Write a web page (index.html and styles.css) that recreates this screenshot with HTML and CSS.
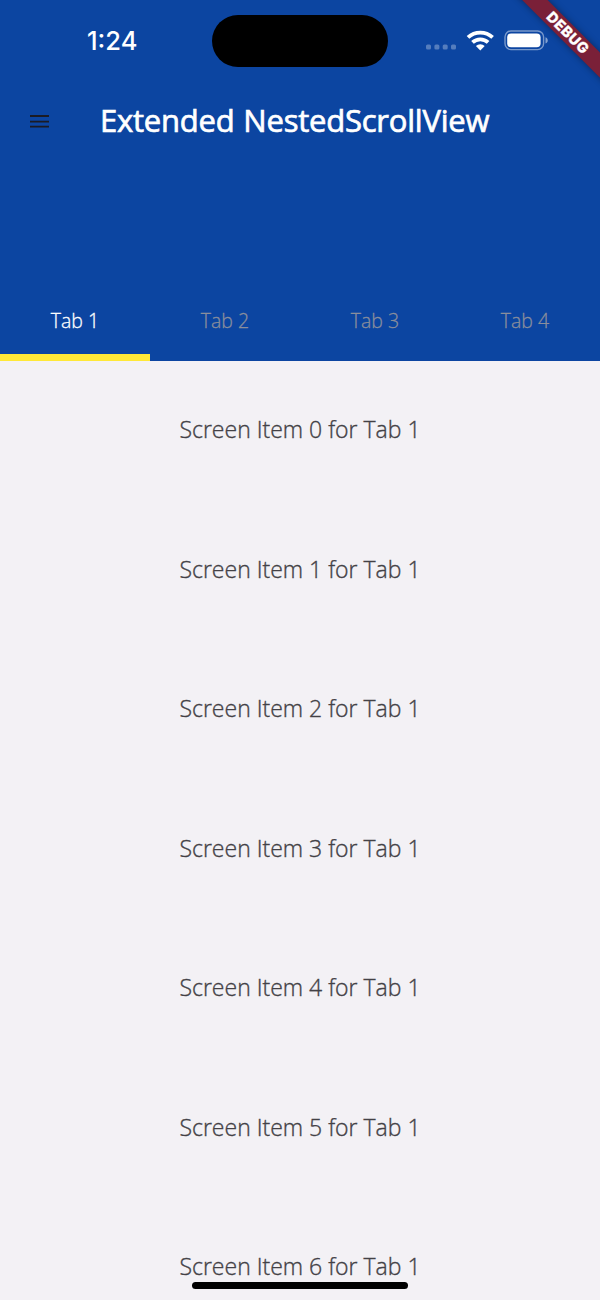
FILE: index.html
```html
<!DOCTYPE html>
<html lang="en">
<head>
<meta charset="utf-8">
<title>Extended NestedScrollView</title>
<link rel="stylesheet" href="styles.css">
</head>
<body>
<div class="screen">
  <header class="app-header">
    <div class="status-bar">
      <div class="clock">1:24</div>
      <div class="island"></div>
      <svg class="status-icons" width="124" height="22" viewBox="0 0 124 22">
        <g fill="#fff" fill-opacity=".3">
          <rect x="1" y="14.5" width="5" height="5" rx="1.5"/>
          <rect x="9.4" y="14.5" width="5" height="5" rx="1.5"/>
          <rect x="17.7" y="14.5" width="5" height="5" rx="1.5"/>
          <rect x="26" y="14.5" width="5" height="5" rx="1.5"/>
        </g>
        <g fill="none" stroke="#fff" stroke-width="3.8">
          <path d="M43 7.4a18 18 0 0 1 24.6 0"/>
          <path d="M47.5 12.4a11.4 11.4 0 0 1 15.6 0"/>
        </g>
        <path d="M50.9 16a6.4 6.4 0 0 1 8.8 0l-4.4 4.4z" fill="#fff"/>
        <rect x="80" y="1" width="38.6" height="18.6" rx="6" fill="none" stroke="#fff" stroke-opacity=".45" stroke-width="1.4"/>
        <rect x="82.2" y="3.4" width="33.4" height="13.8" rx="4" fill="#fff"/>
        <path d="M120.5 7.2c3 1.2 3 5.2 0 6.4z" fill="#fff" fill-opacity=".5"/>
      </svg>
    </div>
    <div class="toolbar">
      <svg class="menu" width="20" height="16" viewBox="0 0 20 16"><path d="M0 3h19M0 8.6h19M0 13.6h19" stroke="#1b1b24" stroke-width="1.8"/></svg>
      <h1 class="title">Extended NestedScrollView</h1>
    </div>
    <nav class="tabs">
      <div class="tab active">Tab 1</div>
      <div class="tab">Tab 2</div>
      <div class="tab">Tab 3</div>
      <div class="tab">Tab 4</div>
    </nav>
  </header>
  <main class="list">
    <div class="item">Screen Item 0 for Tab 1</div>
    <div class="item">Screen Item 1 for Tab 1</div>
    <div class="item">Screen Item 2 for Tab 1</div>
    <div class="item">Screen Item 3 for Tab 1</div>
    <div class="item">Screen Item 4 for Tab 1</div>
    <div class="item">Screen Item 5 for Tab 1</div>
    <div class="item">Screen Item 6 for Tab 1</div>
  </main>
  <div class="debug">DEBUG</div>
  <div class="home-bar"></div>
</div>
</body>
</html>
```
FILE: styles.css
```css
* { box-sizing: border-box; }
body { margin: 0; font-family: "Open Sans", "Noto Sans", sans-serif; }
.screen { position: relative; width: 600px; height: 1300px; overflow: hidden; background: #f3f1f5; }
.app-header { height: 361px; background: #0c45a1; display: flex; flex-direction: column; }
.status-bar { height: 82px; display: grid; grid-template-columns: 212px 176px 212px; align-items: center; }
.clock { padding-left: 87px; font: 500 25.5px/30px Inter, sans-serif; color: #fff; }
.island { height: 52px; border-radius: 26px; background: #000; }
.status-icons { margin-left: 37px; }
.toolbar { height: 78px; display: flex; align-items: center; padding-left: 29.5px; }
.menu { flex: none; }
.title { margin: -3px 0 0 50.5px; font-size: 31px; line-height: 44px; font-weight: 400; letter-spacing: -0.22px; word-spacing: 1px; -webkit-text-stroke: 0.7px #fff; color: #fff; white-space: nowrap; }
.tabs { margin-top: auto; height: 80px; display: grid; grid-template-columns: repeat(4, 1fr); }
.tab { text-align: center; padding-top: 26px; border-bottom: 7px solid transparent; font-size: 19.5px; line-height: 28px; font-weight: 300; color: #8a8e9c; -webkit-text-stroke: 0.3px currentColor; }
.active { color: #fff; border-color: #ffe838; }
.item { height: 139.5px; padding-bottom: 3px; display: flex; align-items: center; justify-content: center; font-size: 23px; font-weight: 300; color: #434146; -webkit-text-stroke: 0.35px currentColor; white-space: nowrap; }
.debug { position: absolute; left: 487.5px; top: 24px; width: 160px; height: 17.5px; transform: rotate(45deg); background: #7a2038; box-shadow: 0 0 7px rgba(0,0,0,.4); color: #fff; text-align: center; font: 800 14.5px/17.5px Inter, sans-serif; letter-spacing: 0.5px; -webkit-text-stroke: 0.3px #fff; }
.home-bar { position: absolute; left: 192px; top: 1282px; width: 216px; height: 7px; border-radius: 4px; background: #000; }
```
